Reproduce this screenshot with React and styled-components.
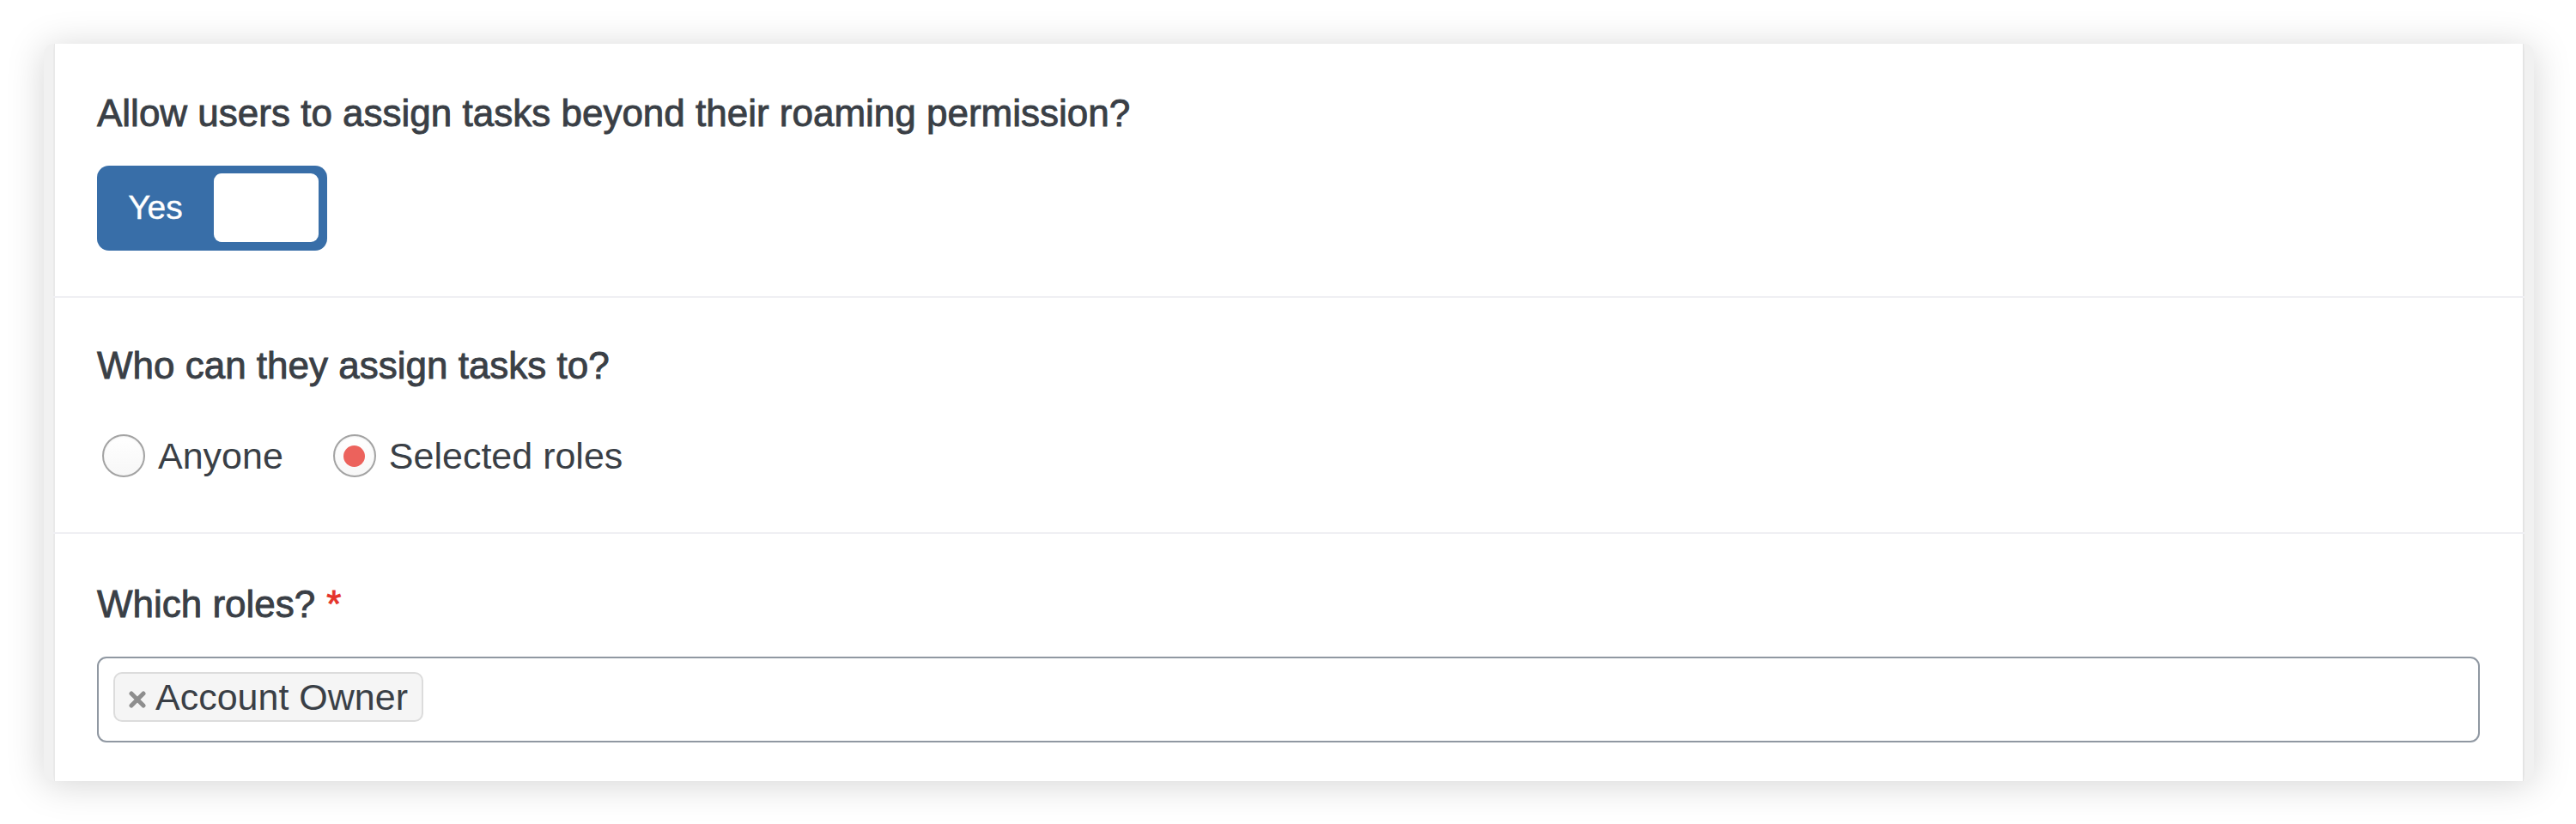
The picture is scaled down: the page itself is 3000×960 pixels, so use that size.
import React from 'react';
import styled, { createGlobalStyle } from 'styled-components';

const GlobalStyle = createGlobalStyle`
  html, body {
    margin: 0;
    padding: 0;
    background: #ffffff;
  }
  body {
    font-family: "Liberation Sans", Arial, sans-serif;
    color: #3a3f46;
  }
`;

const Page = styled.div`
  padding: 51px 49px 51px 51px;
`;

const Card = styled.div`
  width: 2900px;
  box-sizing: border-box;
  border-left: 11px solid #f1f1f1;
  border-right: 11px solid #f1f1f1;
  border-radius: 12px;
  background: #f1f1f1;
  box-shadow: 0 4px 44px rgba(0, 0, 0, 0.17);
  overflow: hidden;
`;

const Content = styled.div`
  background: #ffffff;
  box-shadow: inset -2px 0 0 #e4e4e4, inset 2px 0 0 #e9e9e9;
`;

const Section = styled.section`
  padding: ${(p) => p.$pad};
  border-bottom: ${(p) => (p.$last ? 'none' : '2px solid #efeff3')};
`;

const Question = styled.div`
  font-size: 44px;
  line-height: 50px;
  font-weight: 400;
  -webkit-text-stroke: 0.9px #3a3f46;
  color: #3a3f46;
  margin-bottom: ${(p) => p.$gap};
`;

const Required = styled.span`
  color: #e5342a;
  -webkit-text-stroke: 0.9px #e5342a;
  margin-left: 13px;
`;

const Toggle = styled.div`
  width: 268px;
  height: 99px;
  box-sizing: border-box;
  background: #386ea8;
  border-radius: 14px;
  padding: 9px 10px 10px 0;
  display: flex;
  align-items: stretch;
`;

const ToggleLabel = styled.span`
  flex: 1;
  display: flex;
  align-items: center;
  justify-content: center;
  color: #ffffff;
  font-size: 39px;
  -webkit-text-stroke: 0.4px #ffffff;
`;

const Knob = styled.span`
  width: 122px;
  background: #ffffff;
  border-radius: 9px;
`;

const RadioRow = styled.div`
  display: flex;
  align-items: center;
  gap: 58px;
  padding-left: 6px;
`;

const RadioOption = styled.label`
  display: flex;
  align-items: center;
  gap: 15px;
  font-size: 43px;
  line-height: 50px;
  color: #3a3f46;
`;

const RadioCircle = styled.span`
  width: 50px;
  height: 50px;
  box-sizing: border-box;
  border-radius: 50%;
  border: 2px solid #a3a3a3;
  background: linear-gradient(#ffffff, #f7f7f7);
  box-shadow: inset 0 1px 2px rgba(0, 0, 0, 0.06);
  display: flex;
  align-items: center;
  justify-content: center;

  &::after {
    content: '';
    width: 25px;
    height: 25px;
    border-radius: 50%;
    background: ${(p) => (p.$checked ? '#ec625c' : 'transparent')};
  }
`;

const TagInput = styled.div`
  height: 100px;
  box-sizing: border-box;
  border: 2px solid #9098a2;
  border-radius: 11px;
  padding: 16px 17px;
  display: flex;
  align-items: flex-start;
`;

const Tag = styled.span`
  height: 58px;
  box-sizing: border-box;
  display: flex;
  align-items: center;
  gap: 11px;
  padding: 0 16px 0 16px;
  background: #f5f5f5;
  border: 2px solid #dcdcdc;
  border-radius: 10px;
  font-size: 43px;
  color: #3a3f46;
`;

const TagRemove = styled.svg`
  width: 20px;
  height: 20px;
  margin-top: 6px;
  flex: none;
`;

export default function App() {
  return (
    <>
      <GlobalStyle />
      <Page>
        <Card>
          <Content>
            <Section $pad="56px 51px 53px 51px">
              <Question $gap="36px">Allow users to assign tasks beyond their roaming permission?</Question>
              <Toggle>
                <ToggleLabel>Yes</ToggleLabel>
                <Knob />
              </Toggle>
            </Section>
            <Section $pad="54px 51px 64px 51px">
              <Question $gap="55px">Who can they assign tasks to?</Question>
              <RadioRow>
                <RadioOption>
                  <RadioCircle />
                  Anyone
                </RadioOption>
                <RadioOption>
                  <RadioCircle $checked />
                  Selected roles
                </RadioOption>
              </RadioRow>
            </Section>
            <Section $last $pad="57px 52px 45px 51px">
              <Question $gap="36px">
                Which roles?<Required>*</Required>
              </Question>
              <TagInput>
                <Tag>
                  <TagRemove viewBox="0 0 20 20">
                    <path d="M3 3 L17 17 M17 3 L3 17" stroke="#8e8e8e" strokeWidth="5" strokeLinecap="round" />
                  </TagRemove>
                  Account Owner
                </Tag>
              </TagInput>
            </Section>
          </Content>
        </Card>
      </Page>
    </>
  );
}
